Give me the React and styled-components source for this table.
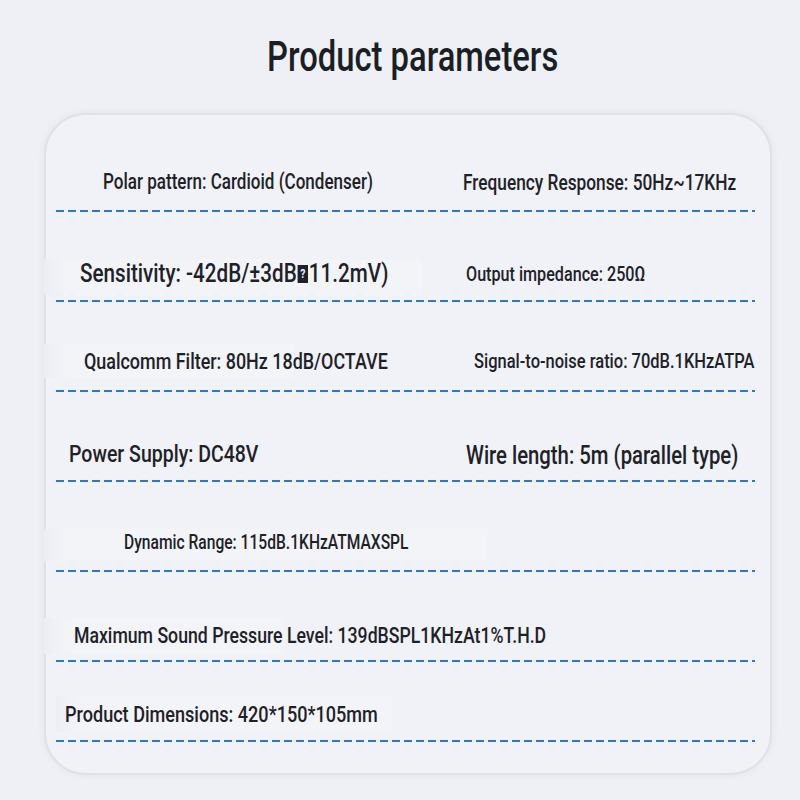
import React from "react";
import styled, { createGlobalStyle } from "styled-components";

const Global = createGlobalStyle`
  html, body { margin: 0; padding: 0; background: #eef0f5; }
  body { font-family: Roboto, "Liberation Sans", sans-serif; color: #1e2228; }
`;

const Page = styled.div`
  width: 800px;
  height: 800px;
  box-sizing: border-box;
  padding-top: 33px;
  display: flex;
  flex-direction: column;
  align-items: flex-start;
`;

const Title = styled.h1`
  margin: 0;
  height: 80px;
  align-self: stretch;
  display: flex;
  justify-content: center;
  padding-left: 26px;
  font-size: 42px;
  font-weight: 500;
  line-height: 48px;
  color: #1b1f25;
  span {
    display: inline-block;
    transform: scaleX(0.78);
  }
`;

const Card = styled.div`
  margin-left: 44px;
  width: 728px;
  height: 662px;
  box-sizing: border-box;
  border: 2px solid #dfe1e8;
  border-radius: 42px;
  background: #f0f2f7;
  box-shadow: 0 0 6px rgba(200, 204, 215, 0.35);
  padding-top: 6px;
  display: flex;
  flex-direction: column;
`;

const Row = styled.div`
  height: ${(p) => p.$h}px;
  flex-shrink: 0;
  display: grid;
  grid-template-columns: 400px 1fr;
  align-items: end;
  position: relative;
`;

const Cell = styled.div`
  position: relative;
  height: 100%;
  display: flex;
  align-items: flex-end;
  padding-bottom: ${(p) => p.$pb}px;
  box-sizing: border-box;
  padding-left: ${(p) => p.$left}px;
  grid-column: ${(p) => (p.$right ? 2 : 1)};
`;

const Label = styled.span`
  display: inline-block;
  white-space: nowrap;
  font-size: ${(p) => p.$size}px;
  font-weight: 500;
  line-height: 1.2;
  transform: scaleX(0.8);
  transform-origin: left center;
  color: #1e2228;
`;

const Missing = styled.b`
  display: inline-block;
  box-sizing: border-box;
  width: 13px;
  height: 18px;
  margin: 0 1px;
  background: #1e2228;
  color: #eef0f5;
  font-size: 13px;
  font-weight: 700;
  line-height: 18px;
  text-align: center;
  vertical-align: -1px;
  overflow: hidden;
`;

const Patch = styled.div`
  position: absolute;
  left: ${(p) => p.$x}px;
  bottom: ${(p) => p.$b}px;
  width: ${(p) => p.$w}px;
  height: ${(p) => p.$hh}px;
  background: linear-gradient(90deg, #eceef3 0, #f3f4f8 24px, #f3f4f8 100%);
`;

const Divider = styled.div`
  position: absolute;
  left: 10px;
  bottom: 0;
  width: 699px;
  height: 2px;
  background: repeating-linear-gradient(
    90deg,
    #2f79c4 0 8px,
    transparent 8px 12px
  );
`;

const rows = [
  {
    h: 91,
    cells: [
      { text: "Polar pattern: Cardioid (Condenser)", left: 57, size: 21.3, pb: 17 },
      { text: "Frequency Response: 50Hz~17KHz", left: 17, size: 21.6, pb: 16, right: true },
    ],
  },
  {
    h: 90,
    patch: { x: -2, b: 7, w: 378, hh: 36 },
    cells: [
      {
        text: (
          <>
            Sensitivity: -42dB/±3dB<Missing>?</Missing>11.2mV)
          </>
        ),
        left: 34,
        size: 25.8,
        pb: 13,
      },
      { text: "Output impedance: 250Ω", left: 20, size: 20.2, pb: 16, right: true },
    ],
  },
  {
    h: 90,
    patch: { x: -2, b: 14, w: 250, hh: 34 },
    cells: [
      { text: "Qualcomm Filter: 80Hz 18dB/OCTAVE", left: 38, size: 22.4, pb: 17 },
      { text: "Signal-to-noise ratio: 70dB.1KHzATPA", left: 28, size: 20.6, pb: 18, right: true },
    ],
  },
  {
    h: 90,
    cells: [
      { text: "Power Supply: DC48V", left: 23, size: 24.4, pb: 14 },
      { text: "Wire length: 5m (parallel type)", left: 20, size: 25.4, pb: 12, right: true },
    ],
  },
  {
    h: 90,
    patch: { x: -2, b: 11, w: 443, hh: 32 },
    cells: [{ text: "Dynamic Range: 115dB.1KHzATMAXSPL", left: 78, size: 19.5, pb: 18 }],
  },
  {
    h: 90,
    patch: { x: -2, b: 8, w: 240, hh: 36 },
    cells: [
      { text: "Maximum Sound Pressure Level: 139dBSPL1KHzAt1%T.H.D", left: 28, size: 22.1, pb: 14 },
    ],
  },
  {
    h: 80,
    patch: { x: 10, b: 10, w: 336, hh: 36 },
    cells: [{ text: "Product Dimensions: 420*150*105mm", left: 19, size: 22.6, pb: 14 }],
  },
];

export default function App() {
  return (
    <>
      <Global />
      <Page>
        <Title>
          <span>Product parameters</span>
        </Title>
        <Card>
          {rows.map((r, i) => (
            <Row key={i} $h={r.h}>
              {r.patch && (
                <Patch $x={r.patch.x} $b={r.patch.b} $w={r.patch.w} $hh={r.patch.hh} />
              )}
              {r.cells.map((c, j) => (
                <Cell key={j} $left={c.left} $pb={c.pb} $right={c.right}>
                  <Label $size={c.size}>{c.text}</Label>
                </Cell>
              ))}
              <Divider />
            </Row>
          ))}
        </Card>
      </Page>
    </>
  );
}
